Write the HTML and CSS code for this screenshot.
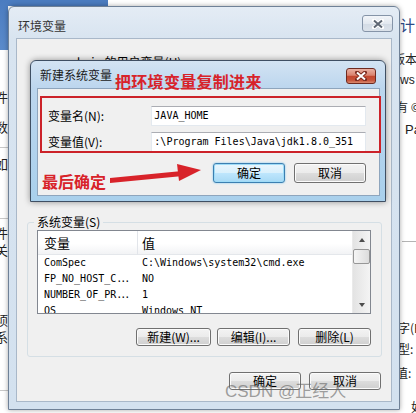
FILE: index.html
```html
<!DOCTYPE html>
<html lang="zh-CN">
<head>
    <meta charset="UTF-8">
    <title>环境变量</title>
    <link rel="stylesheet" href="styles.css">
</head>
<body>
    <!-- windows behind the dialog -->
    <div class="bg-top"></div>
    <div class="bg-left">
        <div class="lf lf1">件</div>
        <div class="lf lf2">数</div>
        <div class="lf-line lf3"></div>
        <div class="lf lf4">如</div>
        <div class="lf-line lf5"></div>
        <div class="lf lf6">件</div>
        <div class="lf lf7">关</div>
        <div class="lf lf8">顷</div>
        <div class="lf lf9">系</div>
        <div class="lf-line lf10"></div>
    </div>
    <div class="bg-right">
        <div class="rt rt1">设计</div>
        <div class="rt rt2">版本</div>
        <div class="rt rt3">ws 7</div>
        <div class="rt rt4">有 ©</div>
        <div class="rt rt5">Pa</div>
        <div class="rt-line"></div>
        <div class="rt rt6">字(F</div>
        <div class="rt rt7">型:</div>
        <div class="rt rt8">值:</div>
        <div class="rt rt9">如</div>
    </div>

    <!-- 环境变量 -->
    <div class="win-outer">
        <div class="titlebar">
            <span class="win-title">环境变量</span>
            <span class="close-btn">
                <svg width="12" height="10" viewBox="0 0 12 10"><path d="M2 1.5 L10 8.5 M10 1.5 L2 8.5" stroke="#fff" stroke-width="4" stroke-linecap="round"/><path d="M2 1.5 L10 8.5 M10 1.5 L2 8.5" stroke="#5d6673" stroke-width="2"/></svg>
            </span>
        </div>
        <div class="client">
            <div class="user-area">
                <span class="user-label">admin 的用户变量(U)</span>
            </div>
            <div class="group">
                <div class="group-title">系统变量(S)</div>
                <div class="list">
                    <div class="list-main">
                        <div class="list-head">
                            <div class="col1">变量</div>
                            <div class="col2">值</div>
                        </div>
                        <div class="row"><div class="col1 mono">ComSpec</div><div class="col2 mono">C:\Windows\system32\cmd.exe</div></div>
                        <div class="row"><div class="col1 mono">FP_NO_HOST_C<span class="dots">...</span></div><div class="col2 mono">NO</div></div>
                        <div class="row"><div class="col1 mono">NUMBER_OF_PR<span class="dots">...</span></div><div class="col2 mono">1</div></div>
                        <div class="row"><div class="col1 mono">OS</div><div class="col2 mono">Windows_NT</div></div>
                    </div>
                    <div class="sb">
                        <div class="sb-btn"><span class="tri-up"></span></div>
                        <div class="sb-thumb"></div>
                        <div class="sb-track"></div>
                        <div class="sb-btn"><span class="tri-down"></span></div>
                    </div>
                </div>
                <div class="btn-row">
                    <div class="btn w75">新建(W)...</div>
                    <div class="btn w73 gap6">编辑(I)...</div>
                    <div class="btn w73 gap8">删除(L)</div>
                </div>
            </div>
            <div class="dlg-buttons">
                <div class="btn w72">确定</div>
                <div class="btn w72 gap8">取消</div>
            </div>
        </div>
    </div>

    <!-- 新建系统变量 -->
    <div class="win-inner">
        <div class="inner-titlebar">
            <span class="inner-title">新建系统变量</span>
            <span class="close-red">
                <svg width="12" height="10" viewBox="0 0 12 10"><path d="M2 1.5 L10 8.5 M10 1.5 L2 8.5" stroke="#7a2a1e" stroke-width="4" stroke-linecap="round"/><path d="M2 1.5 L10 8.5 M10 1.5 L2 8.5" stroke="#fff" stroke-width="2"/></svg>
            </span>
        </div>
        <div class="inner-client">
            <div class="field">
                <label class="field-label">变量名(N):</label>
                <div class="input mono">JAVA_HOME</div>
            </div>
            <div class="field gap-field">
                <label class="field-label">变量值(V):</label>
                <div class="input mono">:\Program Files\Java\jdk1.8.0_351</div>
            </div>
            <div class="inner-buttons">
                <div class="btn btn-inner btn-default">确定</div>
                <div class="btn btn-inner gap9">取消</div>
            </div>
        </div>
    </div>

    <!-- annotations drawn on the screenshot -->
    <div class="mark-box"></div>
    <div class="mark-text mark-copy">把环境变量复制进来</div>
    <div class="mark-text mark-ok">最后确定</div>
    <svg class="mark-arrow" width="100" height="28" viewBox="0 0 100 28">
        <polygon points="5,18 77,11 78,16 5,23" fill="#d8232a"/>
        <polygon points="72,4 96,10 74,21" fill="#d8232a"/>
    </svg>
    <div class="watermark">CSDN @正经人</div>
</body>
</html>
```

FILE: styles.css
```css
body {
    margin: 0;
    width: 416px;
    height: 413px;
    overflow: hidden;
    position: relative;
    background: #fff;
    font-family: "Noto Sans CJK SC", sans-serif;
    font-size: 12px;
    line-height: 14px;
    color: #000;
}
.mono {
    font-family: "DejaVu Sans Mono", "Noto Sans CJK SC", monospace;
    font-size: 10px;
}
.dots {
    letter-spacing: -2px;
}

/* background windows */
.bg-top {
    position: absolute;
    left: 0;
    top: 0;
    width: 108px;
    height: 6px;
    background: #4b7cc0;
}
.bg-left {
    position: absolute;
    left: 0;
    top: 0;
    width: 8px;
    height: 413px;
    overflow: hidden;
    background: linear-gradient(#4b7cc0 0, #5b8bcb 50px, #fff 50px);
}
.lf {
    margin-left: -5px;
    font-size: 13px;
    color: #222;
}
.lf-line {
    height: 1px;
    background: #c8c8c8;
}
.lf1 { margin-top: 90px; }
.lf2 { margin-top: 16px; }
.lf3 { margin-top: 13px; }
.lf4 { margin-top: 9px; }
.lf5 { margin-top: 47px; }
.lf6 { margin-top: 7px; }
.lf7 { margin-top: 3px; }
.lf8 { margin-top: 56px; }
.lf9 { margin-top: 3px; }
.lf10 { margin-top: 46px; }

.bg-right {
    position: absolute;
    left: 392px;
    top: 0;
    width: 24px;
    height: 413px;
    overflow: hidden;
    background: #fff;
}
.rt {
    white-space: nowrap;
    color: #222;
}
.rt1 { margin: 16px 0 0 -7px; font-size: 15px; line-height: 17px; color: #2c4a86; }
.rt2 { margin: 19px 0 0 1px; }
.rt3 { margin: 7px 0 0 8px; font-family: "Liberation Sans", sans-serif; }
.rt4 { margin: 13px 0 0 4px; }
.rt5 { margin: 9px 0 0 13px; font-family: "Liberation Sans", sans-serif; font-size: 13px; }
.rt-line {
    margin: 104px 0 0 10px;
    height: 1px;
    background: #b4b4b4;
}
.rt6 { margin: 79px 0 0 6px; }
.rt7 { margin: 7px 0 0 6px; }
.rt8 { margin: 10px 0 0 4px; }
.rt9 { margin: 20px 0 0 19px; }

/* outer dialog */
.win-outer {
    position: absolute;
    left: 8px;
    top: 6px;
    width: 392px;
    height: 404px;
    box-sizing: border-box;
    border: 1px solid #6f8197;
    border-radius: 6px 6px 0 0;
    background: linear-gradient(#e4ecf5, #d8e4f0 32px, #d3e1ef);
    box-shadow: 0 0 5px rgba(0, 0, 0, 0.35);
    padding: 0 7px 7px 7px;
    display: flex;
    flex-direction: column;
}
.titlebar {
    height: 31px;
    display: flex;
    justify-content: space-between;
    align-items: flex-start;
}
.win-title {
    margin: 12px 0 0 2px;
    color: #333;
}
.close-btn {
    margin: 8px -1px 0 0;
    width: 31px;
    height: 17px;
    box-sizing: border-box;
    border: 1px solid #8594a8;
    border-radius: 3px;
    background: linear-gradient(#f2f5f9, #e2e8ef 50%, #d3dbe5 51%, #dbe2ea);
    display: flex;
    align-items: center;
    justify-content: center;
}
.client {
    flex: 1;
    background: #f0f0f0;
    border: 1px solid #a9b8c9;
    box-sizing: border-box;
    display: flex;
    flex-direction: column;
}
.user-area {
    height: 183px;
    box-sizing: border-box;
    padding: 16px 0 0 49px;
}
.user-label {
    font-size: 12px;
}
.group {
    margin: 0 9px 0 10px;
    height: 135px;
    box-sizing: border-box;
    border: 1px solid #d5dfe5;
    border-radius: 3px;
    padding: 6px 10px 0 9px;
}
.group-title {
    width: max-content;
    margin: -15px 0 0 -3px;
    padding: 0 3px;
    line-height: 16px;
    background: #f0f0f0;
}
.list {
    height: 84px;
    box-sizing: border-box;
    border: 1px solid #828790;
    background: #fff;
    display: flex;
}
.list-main {
    flex: 1;
    overflow: hidden;
}
.list-head {
    height: 24px;
    box-sizing: border-box;
    display: flex;
    align-items: center;
    background: linear-gradient(#fff, #fff 55%, #f2f3f5);
    border-bottom: 1px solid #e4e7eb;
}
.list-head .col1 {
    height: 24px;
    line-height: 23px;
    border-right: 1px solid #e2e5ea;
    font-size: 13px;
}
.list-head .col2 {
    font-size: 13px;
}
.col1 {
    width: 100px;
    box-sizing: border-box;
    padding-left: 6px;
    white-space: nowrap;
    overflow: hidden;
}
.col2 {
    padding-left: 4px;
    white-space: nowrap;
}
.row {
    height: 16px;
    display: flex;
    align-items: center;
}
.sb {
    width: 17px;
    display: flex;
    flex-direction: column;
    background: linear-gradient(90deg, #e3e3e3, #f4f4f4);
    border-left: 1px solid #eaeaea;
}
.sb-btn {
    height: 17px;
    display: flex;
    align-items: center;
    justify-content: center;
}
.tri-up {
    border-left: 3px solid transparent;
    border-right: 3px solid transparent;
    border-bottom: 4px solid #4d4d4d;
}
.tri-down {
    border-left: 3px solid transparent;
    border-right: 3px solid transparent;
    border-top: 4px solid #4d4d4d;
}
.sb-thumb {
    height: 15px;
    margin: 1px 0 0 0;
    box-sizing: border-box;
    border: 1px solid #979797;
    border-radius: 2px;
    background: linear-gradient(90deg, #f5f5f5, #dcdcdc);
}
.sb-track {
    flex: 1;
}
.btn-row {
    margin-top: 14px;
    display: flex;
    justify-content: flex-end;
}
.dlg-buttons {
    margin: 15px 10px 0 0;
    display: flex;
    justify-content: flex-end;
}

/* buttons */
.btn {
    height: 18px;
    box-sizing: border-box;
    border: 1px solid #707070;
    border-radius: 3px;
    background: linear-gradient(#f3f3f3, #ebebeb 50%, #dddddd 51%, #cfcfcf);
    box-shadow: inset 0 0 0 1px #fbfbfb;
    display: flex;
    align-items: center;
    justify-content: center;
    white-space: nowrap;
}
.w72 { width: 72px; }
.w73 { width: 73px; }
.w75 { width: 75px; }
.gap6 { margin-left: 6px; }
.gap8 { margin-left: 8px; }
.gap9 { margin-left: 9px; }
.btn-inner {
    width: 72px;
    height: 20px;
}
.btn-default {
    border-color: #3c7fb1;
    background: linear-gradient(#eaf6fd, #d9f0fc 50%, #bee6fd 51%, #a7d9f5);
    box-shadow: inset 0 0 0 1px #9fdcf7, 0 0 2px #6cc0ee;
}

/* inner dialog */
.win-inner {
    position: absolute;
    left: 30px;
    top: 60px;
    width: 356px;
    height: 142px;
    box-sizing: border-box;
    border: 1px solid #3f4f63;
    border-radius: 6px 6px 0 0;
    background: linear-gradient(#d3e3f3, #bcd6ee 27px, #a9d0ec);
    box-shadow: 0 0 6px rgba(0, 0, 0, 0.4);
    padding: 0 5px 5px 6px;
    display: flex;
    flex-direction: column;
}
.inner-titlebar {
    height: 27px;
    display: flex;
    justify-content: space-between;
    align-items: flex-start;
}
.inner-title {
    margin: 7px 0 0 3px;
    color: #1a1a1a;
}
.close-red {
    margin: 7px 4px 0 0;
    width: 30px;
    height: 16px;
    box-sizing: border-box;
    border: 1px solid #6e2a20;
    border-radius: 3px;
    background: linear-gradient(#eab0a2, #d9826e 45%, #c3472f 52%, #c6533a 80%, #d98a6f);
    display: flex;
    align-items: center;
    justify-content: center;
}
.inner-client {
    flex: 1;
    background: #f0f0f0;
    border: 1px solid #8ea5bd;
    padding: 17px 13px 0 10px;
}
.field {
    height: 20px;
    display: flex;
    align-items: center;
}
.gap-field {
    margin-top: 6px;
}
.field-label {
    width: 104px;
}
.input {
    width: 216px;
    height: 20px;
    box-sizing: border-box;
    border: 1px solid #e3e9ef;
    border-top-color: #abadb3;
    background: #fff;
    padding-left: 2px;
    line-height: 18px;
    white-space: nowrap;
    overflow: hidden;
}
.inner-buttons {
    margin-top: 11px;
    display: flex;
    justify-content: flex-end;
}

/* red annotations */
.mark-box {
    position: absolute;
    left: 40px;
    top: 96px;
    width: 341px;
    height: 57px;
    box-sizing: border-box;
    border: 2px solid #cc2229;
}
.mark-text {
    position: absolute;
    color: #d8232a;
    font-weight: bold;
    font-size: 16px;
    line-height: 20px;
    white-space: nowrap;
}
.mark-copy {
    left: 115px;
    top: 71px;
    letter-spacing: 0.3px;
}
.mark-ok {
    left: 42px;
    top: 171px;
}
.mark-arrow {
    position: absolute;
    left: 105px;
    top: 160px;
}
.watermark {
    position: absolute;
    left: 225px;
    top: 382px;
    font-family: "Liberation Sans", "Noto Sans CJK SC", sans-serif;
    font-size: 17px;
    line-height: 20px;
    color: rgba(100, 100, 100, 0.6);
    white-space: nowrap;
}
```
